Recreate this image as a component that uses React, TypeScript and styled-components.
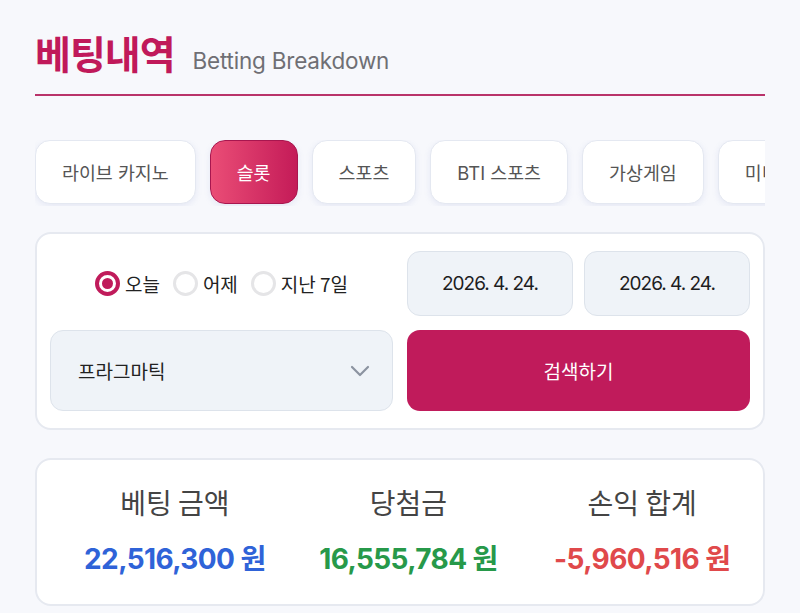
import React, { useState } from 'react';
import styled, { createGlobalStyle } from 'styled-components';

const GlobalStyle = createGlobalStyle`
  html, body {
    margin: 0;
    padding: 0;
    background: #f7f8fc;
  }
  body {
    font-family: Inter, "Noto Sans CJK KR", "Noto Sans", sans-serif;
    -webkit-font-smoothing: antialiased;
  }
  * { box-sizing: border-box; }
`;

const Page = styled.div`
  padding: 28px 35px 0;
`;

const Header = styled.div`
  display: flex;
  align-items: baseline;
  gap: 18px;
  padding-bottom: 18px;
  border-bottom: 2px solid #b9336a;
`;

const Title = styled.h1`
  margin: 0;
  font-family: "Noto Sans CJK KR", sans-serif;
  font-size: 39px;
  line-height: 48px;
  font-weight: 700;
  color: #c0195a;
  letter-spacing: -1px;
`;

const SubTitle = styled.span`
  font-size: 22.5px;
  color: #6f6f74;
  letter-spacing: -0.2px;
`;

const TabRow = styled.div`
  display: flex;
  gap: 14px;
  margin-top: 44px;
  height: 66px;
  overflow: hidden;
`;

const Tab = styled.button<{ $active?: boolean }>`
  flex: 0 0 auto;
  height: 64px;
  padding: 0 26px;
  border-radius: 15px;
  font-family: Inter, "Noto Sans CJK KR", sans-serif;
  font-size: 18.4px;
  cursor: pointer;
  color: ${p => (p.$active ? '#fff' : '#555')};
  border: 1px solid ${p => (p.$active ? '#a8164f' : '#e4e8f1')};
  background: ${p => (p.$active ? 'linear-gradient(90deg, #ea4d76 0%, #c41b58 100%)' : '#fff')};
  box-shadow: 0 2px 6px rgba(120, 135, 200, 0.14);
`;

const Card = styled.div`
  background: #fff;
  border: 2px solid #e6e9f0;
  border-radius: 16px;
`;

const FilterCard = styled(Card)`
  margin-top: 26px;
  padding: 17px 13px;
  display: grid;
  grid-template-columns: 1fr 1fr;
  column-gap: 14px;
  row-gap: 14px;
`;

const RadioGroup = styled.div`
  display: flex;
  align-items: center;
  justify-content: center;
  gap: 13px;
  height: 65px;
`;

const RadioLabel = styled.label`
  display: flex;
  align-items: center;
  gap: 5px;
  font-family: "Noto Sans CJK KR", sans-serif;
  font-size: 19px;
  color: #222;
  cursor: pointer;
`;

const RadioDot = styled.span<{ $checked: boolean }>`
  width: 25px;
  height: 25px;
  border-radius: 50%;
  border: ${p => (p.$checked ? '4px solid #c01b5b' : '3px solid #e5e5e7')};
  background: #fff;
  display: flex;
  align-items: center;
  justify-content: center;

  &::after {
    content: '';
    width: 11px;
    height: 11px;
    border-radius: 50%;
    background: ${p => (p.$checked ? '#c01b5b' : 'transparent')};
  }
`;

const DateRow = styled.div`
  display: flex;
  gap: 11px;
`;

const DateBox = styled.div`
  flex: 1;
  height: 65px;
  background: #eff3f8;
  border: 1px solid #dde3eb;
  border-radius: 13px;
  display: flex;
  align-items: center;
  justify-content: center;
  font-size: 19px;
  color: #1d1d1f;
  letter-spacing: -1px;
`;

const Select = styled.div`
  height: 81px;
  background: #eff3f8;
  border: 1px solid #dde3eb;
  border-radius: 13px;
  display: flex;
  align-items: center;
  justify-content: space-between;
  padding: 0 22px 0 27px;
  font-family: "Noto Sans CJK KR", sans-serif;
  font-size: 19px;
  color: #222;
`;

const SearchButton = styled.button`
  height: 81px;
  border: none;
  border-radius: 13px;
  background: #c01b5b;
  color: #fff;
  font-family: "Noto Sans CJK KR", sans-serif;
  font-size: 19px;
  cursor: pointer;
`;

const SummaryCard = styled(Card)`
  margin-top: 28px;
  height: 148px;
  display: grid;
  grid-template-columns: repeat(3, 1fr);
  align-items: center;
  padding: 0 4px 3px 21px;
`;

const Stat = styled.div`
  display: flex;
  flex-direction: column;
  align-items: center;
  gap: 21px;
`;

const StatLabel = styled.div`
  font-family: "Noto Sans CJK KR", sans-serif;
  font-size: 28px;
  line-height: 36px;
  color: #444;
`;

const StatValue = styled.div<{ $color: string }>`
  font-family: Inter, "Noto Sans CJK KR", sans-serif;
  font-size: 28px;
  line-height: 36px;
  font-weight: 700;
  letter-spacing: -0.6px;
  color: ${p => p.$color};
`;

const tabs = ['라이브 카지노', '슬롯', '스포츠', 'BTI 스포츠', '가상게임', '미니게임'];
const ranges = ['오늘', '어제', '지난 7일'];

const stats = [
  { label: '베팅 금액', value: '22,516,300 원', color: '#2f63d8' },
  { label: '당첨금', value: '16,555,784 원', color: '#27994a' },
  { label: '손익 합계', value: '-5,960,516 원', color: '#e0494b' },
];

export default function App() {
  const [tab, setTab] = useState(1);
  const [range, setRange] = useState(0);

  return (
    <Page>
      <GlobalStyle />
      <Header>
        <Title>베팅내역</Title>
        <SubTitle>Betting Breakdown</SubTitle>
      </Header>

      <TabRow>
        {tabs.map((t, i) => (
          <Tab key={t} $active={i === tab} onClick={() => setTab(i)}>
            {t}
          </Tab>
        ))}
      </TabRow>

      <FilterCard>
        <RadioGroup>
          {ranges.map((r, i) => (
            <RadioLabel key={r} onClick={() => setRange(i)}>
              <RadioDot $checked={i === range} />
              {r}
            </RadioLabel>
          ))}
        </RadioGroup>
        <DateRow>
          <DateBox>2026. 4. 24.</DateBox>
          <DateBox>2026. 4. 24.</DateBox>
        </DateRow>
        <Select>
          프라그마틱
          <svg width="20" height="12" viewBox="0 0 20 12" fill="none">
            <path d="M2 2l8 8 8-8" stroke="#8b93a0" strokeWidth="2.2" strokeLinecap="round" strokeLinejoin="round" />
          </svg>
        </Select>
        <SearchButton>검색하기</SearchButton>
      </FilterCard>

      <SummaryCard>
        {stats.map(s => (
          <Stat key={s.label}>
            <StatLabel>{s.label}</StatLabel>
            <StatValue $color={s.color}>{s.value}</StatValue>
          </Stat>
        ))}
      </SummaryCard>
    </Page>
  );
}
